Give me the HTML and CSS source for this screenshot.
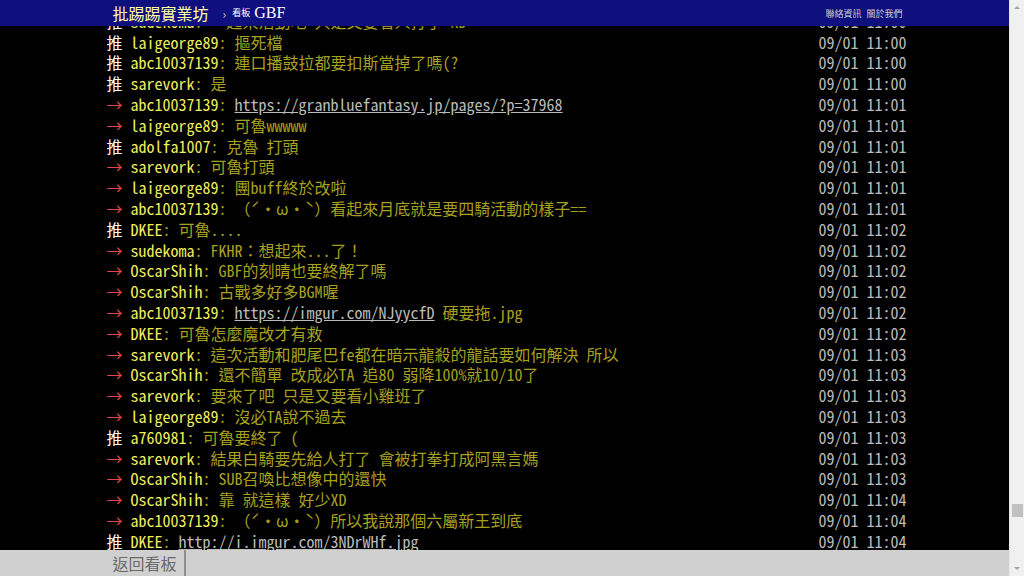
FILE: index.html
```html
<!DOCTYPE html>
<html lang="zh-Hant">
<head>
<meta charset="utf-8">
<title>批踢踢實業坊 › 看板 GBF</title>
<link rel="stylesheet" href="styles.css">
</head>
<body>
<div class="frame">
  <div class="main">
    <div class="content">
      <div class="push"><span class="line"><span class="tag hl">推 </span><span class="uid">sudekoma</span><span class="txt">: 一起來活動吧 只是又要看人打了 XD</span></span><span class="time">09/01 11:00</span></div>
      <div class="push"><span class="line"><span class="tag hl">推 </span><span class="uid">laigeorge89</span><span class="txt">: 摳死檔</span></span><span class="time">09/01 11:00</span></div>
      <div class="push"><span class="line"><span class="tag hl">推 </span><span class="uid">abc10037139</span><span class="txt">: 連口播鼓拉都要扣斯當掉了嗎(?</span></span><span class="time">09/01 11:00</span></div>
      <div class="push"><span class="line"><span class="tag hl">推 </span><span class="uid">sarevork</span><span class="txt">: 是</span></span><span class="time">09/01 11:00</span></div>
      <div class="push"><span class="line"><span class="tag arrow">→ </span><span class="uid">abc10037139</span><span class="txt">: <a class="link" href="#">https://granbluefantasy.jp/pages/?p=37968</a></span></span><span class="time">09/01 11:01</span></div>
      <div class="push"><span class="line"><span class="tag arrow">→ </span><span class="uid">laigeorge89</span><span class="txt">: 可魯wwwww</span></span><span class="time">09/01 11:01</span></div>
      <div class="push"><span class="line"><span class="tag hl">推 </span><span class="uid">adolfa1007</span><span class="txt">: 克魯 打頭</span></span><span class="time">09/01 11:01</span></div>
      <div class="push"><span class="line"><span class="tag arrow">→ </span><span class="uid">sarevork</span><span class="txt">: 可魯打頭</span></span><span class="time">09/01 11:01</span></div>
      <div class="push"><span class="line"><span class="tag arrow">→ </span><span class="uid">laigeorge89</span><span class="txt">: 團buff終於改啦</span></span><span class="time">09/01 11:01</span></div>
      <div class="push"><span class="line"><span class="tag arrow">→ </span><span class="uid">abc10037139</span><span class="txt">: （ˊ・ω・ˋ）看起來月底就是要四騎活動的樣子==</span></span><span class="time">09/01 11:01</span></div>
      <div class="push"><span class="line"><span class="tag hl">推 </span><span class="uid">DKEE</span><span class="txt">: 可魯....</span></span><span class="time">09/01 11:02</span></div>
      <div class="push"><span class="line"><span class="tag arrow">→ </span><span class="uid">sudekoma</span><span class="txt">: FKHR：想起來...了！</span></span><span class="time">09/01 11:02</span></div>
      <div class="push"><span class="line"><span class="tag arrow">→ </span><span class="uid">OscarShih</span><span class="txt">: GBF的刻晴也要終解了嗎</span></span><span class="time">09/01 11:02</span></div>
      <div class="push"><span class="line"><span class="tag arrow">→ </span><span class="uid">OscarShih</span><span class="txt">: 古戰多好多BGM喔</span></span><span class="time">09/01 11:02</span></div>
      <div class="push"><span class="line"><span class="tag arrow">→ </span><span class="uid">abc10037139</span><span class="txt">: <a class="link" href="#">https://imgur.com/NJyycfD</a> 硬要拖.jpg</span></span><span class="time">09/01 11:02</span></div>
      <div class="push"><span class="line"><span class="tag arrow">→ </span><span class="uid">DKEE</span><span class="txt">: 可魯怎麼魔改才有救</span></span><span class="time">09/01 11:02</span></div>
      <div class="push"><span class="line"><span class="tag arrow">→ </span><span class="uid">sarevork</span><span class="txt">: 這次活動和肥尾巴fe都在暗示龍殺的龍話要如何解決 所以</span></span><span class="time">09/01 11:03</span></div>
      <div class="push"><span class="line"><span class="tag arrow">→ </span><span class="uid">OscarShih</span><span class="txt">: 還不簡單 改成必TA 追80 弱降100%就10/10了</span></span><span class="time">09/01 11:03</span></div>
      <div class="push"><span class="line"><span class="tag arrow">→ </span><span class="uid">sarevork</span><span class="txt">: 要來了吧 只是又要看小雞班了</span></span><span class="time">09/01 11:03</span></div>
      <div class="push"><span class="line"><span class="tag arrow">→ </span><span class="uid">laigeorge89</span><span class="txt">: 沒必TA說不過去</span></span><span class="time">09/01 11:03</span></div>
      <div class="push"><span class="line"><span class="tag hl">推 </span><span class="uid">a760981</span><span class="txt">: 可魯要終了 (</span></span><span class="time">09/01 11:03</span></div>
      <div class="push"><span class="line"><span class="tag arrow">→ </span><span class="uid">sarevork</span><span class="txt">: 結果白騎要先給人打了 會被打拳打成阿黑言媽</span></span><span class="time">09/01 11:03</span></div>
      <div class="push"><span class="line"><span class="tag arrow">→ </span><span class="uid">OscarShih</span><span class="txt">: SUB召喚比想像中的還快</span></span><span class="time">09/01 11:03</span></div>
      <div class="push"><span class="line"><span class="tag arrow">→ </span><span class="uid">OscarShih</span><span class="txt">: 靠 就這樣 好少XD</span></span><span class="time">09/01 11:04</span></div>
      <div class="push"><span class="line"><span class="tag arrow">→ </span><span class="uid">abc10037139</span><span class="txt">: （ˊ・ω・ˋ）所以我說那個六屬新王到底</span></span><span class="time">09/01 11:04</span></div>
      <div class="push"><span class="line"><span class="tag hl">推 </span><span class="uid">DKEE</span><span class="txt">: <a class="link" href="#">http://i.imgur.com/3NDrWHf.jpg</a></span></span><span class="time">09/01 11:04</span></div>
    </div>

    <div class="topbar">
      <div class="topbar-inner">
        <div class="crumbs">
          <a class="logo" href="#">批踢踢實業坊</a>
          <span class="sep">›</span>
          <a class="board" href="#"><span class="board-label">看板</span> GBF</a>
        </div>
        <div class="toplinks">
          <a href="#">聯絡資訊</a>
          <a href="#">關於我們</a>
        </div>
      </div>
    </div>

    <div class="navbar">
      <div class="navbar-inner">
        <a class="back" href="#">返回看板</a>
      </div>
    </div>
  </div>

  <div class="scrollbar">
    <div class="sb-arrow sb-up"></div>
    <div class="sb-track">
      <div class="sb-thumb"></div>
    </div>
    <div class="sb-arrow sb-down"></div>
  </div>
</div>
</body>
</html>
```

FILE: styles.css
```css
html, body {
  margin: 0;
  padding: 0;
  background: #000;
  overflow: hidden;
}

.frame {
  display: flex;
  width: 1024px;
  height: 576px;
}

.main {
  flex: 1;
  position: relative;
  overflow: hidden;
  background: #000;
  padding-left: 4px;
}

.content {
  width: 800px;
  margin: 0 auto;
  padding-top: 10.8px;
  font-family: "Noto Sans Mono CJK TC", "Noto Sans CJK TC", "Liberation Mono", monospace;
  font-size: 16px;
  line-height: 20.8px;
  color: #bbb;
}

.push {
  display: flex;
  justify-content: space-between;
  height: 20.8px;
  white-space: pre;
}

.line {
  display: flex;
}

.tag {
  display: inline-block;
  width: 24px;
}

.tag.hl {
  color: #fff;
}

.tag.arrow {
  color: #e24848;
}

.uid {
  color: #eeee5c;
}

.txt {
  color: #a8a020;
}

.link {
  color: #bbb;
  text-decoration: underline;
}

.time {
  color: #bbb;
}

/* top bar */
.topbar {
  position: absolute;
  top: 0;
  left: 0;
  right: 0;
  height: 26px;
  background: #0f0f80;
  padding-left: 4px;
}

.topbar-inner {
  width: 800px;
  height: 26px;
  margin: 0 auto;
  display: flex;
  justify-content: space-between;
  align-items: center;
  font-family: "Noto Sans CJK TC", "Liberation Serif", sans-serif;
}

.topbar a {
  text-decoration: none;
}

.crumbs {
  display: flex;
  align-items: center;
  padding-left: 6px;
}

.logo {
  color: #ffffa0;
  font-size: 16px;
  line-height: 26px;
}

.sep {
  color: #ccc;
  font-size: 12px;
  margin: 0 6px 0 14px;
}

.board {
  color: #fff;
  font-family: "Liberation Serif", serif;
  font-size: 16px;
  line-height: 26px;
}

.board-label {
  font-family: "Noto Sans CJK TC", sans-serif;
  font-size: 9px;
  vertical-align: 2px;
}

.toplinks {
  display: flex;
  gap: 5px;
  padding-right: 4px;
}

.toplinks a {
  color: #ccc;
  font-size: 9px;
}

/* bottom bar */
.navbar {
  position: absolute;
  left: 0;
  right: 0;
  bottom: 0;
  height: 26px;
  background: #d0d0d0;
  padding-left: 4px;
}

.navbar-inner {
  width: 800px;
  height: 26px;
  margin: 0 auto;
  display: flex;
}

.back {
  display: block;
  padding: 0 7px 0 6px;
  border-right: 2px solid #909090;
  color: #6a6a6a;
  font-family: "Noto Sans CJK TC", sans-serif;
  font-size: 16px;
  line-height: 26px;
  text-decoration: none;
}

/* scrollbar */
.scrollbar {
  width: 15px;
  background: #f0f0f0;
  display: flex;
  flex-direction: column;
  border-left: 1px solid #e6e6e6;
  box-sizing: border-box;
}

.sb-arrow {
  height: 15px;
  display: flex;
  align-items: center;
  justify-content: center;
}

.sb-up::before,
.sb-down::before {
  content: "";
  width: 0;
  height: 0;
  border-left: 3px solid transparent;
  border-right: 3px solid transparent;
}

.sb-up::before {
  border-bottom: 3px solid #a3a3a3;
}

.sb-down::before {
  border-top: 3px solid #a3a3a3;
}

.sb-track {
  flex: 1;
  display: flex;
  flex-direction: column;
  justify-content: flex-end;
  padding: 0 1px 44px 2px;
}

.sb-thumb {
  height: 13px;
  background: #c1c1c1;
}
```
